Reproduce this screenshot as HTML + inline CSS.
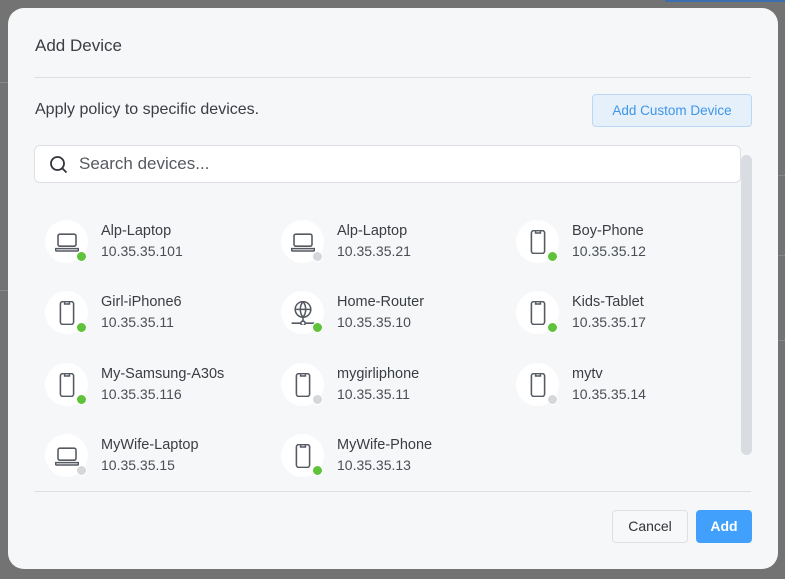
<!DOCTYPE html>
<html><head><style>
*{margin:0;padding:0;box-sizing:border-box}
body{width:785px;height:579px;background:#737373;position:relative;overflow:hidden;font-family:"Liberation Sans",sans-serif;color:#3a3d42}
.bgline{position:absolute;background:#888}
.modal{position:absolute;left:8px;top:8px;width:770px;height:561px;background:#f6f7f9;border-radius:16px}
.a{position:absolute}
.title{left:27px;top:28px;font-size:17px;color:#3a3d42}
.hr{height:1px;background:#dcdfe3;left:26px;width:717px}
.sub{left:27px;top:93px;font-size:16px;color:#3a3d42}
.custom{left:584px;top:86px;width:160px;height:33px;border:1px solid #b9d8f5;background:#e6f0fb;border-radius:4px;color:#3d96e8;font-size:13.5px;text-align:center;line-height:31px}
.search{left:26px;top:137px;width:707px;height:38px;background:#fff;border:1px solid #dde0e4;border-radius:6px}
.search span{position:absolute;left:44px;top:8px;font-size:17px;color:#555a60}
.sb{left:733px;top:147px;width:11px;height:300px;background:#d9dde2;border-radius:6px}
.dev{position:absolute;width:230px;height:46px}
.ic{position:absolute;left:0;top:0;width:43px;height:43px;border-radius:50%;background:#fff}
.ic svg{position:absolute;left:9.5px;top:9.5px}
.dot{position:absolute;left:31px;top:31px;width:11px;height:11px;border-radius:50%;border:1.5px solid #fff}
.on{background:#5ec23a}.off{background:#d5d7da}
.nm{position:absolute;left:56px;top:3px;font-size:14.5px;color:#3a3d42}
.ip{position:absolute;left:56px;top:23px;font-size:14px;color:#4a4e54}
.btn{height:33px;border-radius:4px;font-size:14px;text-align:center;line-height:31px}
.cancel{left:604px;top:502px;width:76px;border:1px solid #dcdfe3;background:#f7f8fa;color:#2f3236}
.add{left:688px;top:502px;width:56px;background:#40a0fb;color:#fff;font-weight:bold;border:1px solid #40a0fb}
</style></head><body>
<div class="bgline" style="left:0;top:82px;width:8px;height:1px"></div>
<div class="bgline" style="left:0;top:290px;width:8px;height:1px"></div>
<div class="bgline" style="left:778px;top:175px;width:7px;height:1px"></div>
<div class="bgline" style="left:778px;top:255px;width:7px;height:1px"></div>
<div class="bgline" style="left:778px;top:340px;width:7px;height:1px"></div>
<div class="bgline" style="left:665px;top:0;width:120px;height:2px;background:#3b6fb0"></div>
<div class="modal">
<div class="a title">Add Device</div>
<div class="a hr" style="top:69px"></div>
<div class="a sub">Apply policy to specific devices.</div>
<div class="a custom">Add Custom Device</div>
<div class="a search"><svg class="a" style="left:14px;top:9px" width="20" height="20" viewBox="0 0 20 20" fill="none" stroke="#2f3236" stroke-width="1.8"><circle cx="8.5" cy="8.5" r="6.5"/><path d="M13.5 13.5l4 4"/></svg><span>Search devices...</span></div>
<div class="a sb"></div>

<div class="dev" style="left:37px;top:212px"><div class="ic"><svg width="24" height="24" viewBox="2 2 20 20" fill="none" stroke="#555a62" stroke-width="1.3"><rect x="4.5" y="5.5" width="15" height="10" rx="1.5"/><path d="M2.5 17.5h19v1a1 1 0 0 1-1 1h-17a1 1 0 0 1-1-1z"/></svg><div class="dot on"></div></div><div class="nm">Alp-Laptop</div><div class="ip">10.35.35.101</div></div>
<div class="dev" style="left:273px;top:212px"><div class="ic"><svg width="24" height="24" viewBox="2 2 20 20" fill="none" stroke="#555a62" stroke-width="1.3"><rect x="4.5" y="5.5" width="15" height="10" rx="1.5"/><path d="M2.5 17.5h19v1a1 1 0 0 1-1 1h-17a1 1 0 0 1-1-1z"/></svg><div class="dot off"></div></div><div class="nm">Alp-Laptop</div><div class="ip">10.35.35.21</div></div>
<div class="dev" style="left:508px;top:212px"><div class="ic"><svg width="24" height="24" viewBox="2 2 20 20" fill="none" stroke="#555a62" stroke-width="1.3"><rect x="6.5" y="2.5" width="11" height="19" rx="2"/><path d="M10 3v1.5h4V3"/></svg><div class="dot on"></div></div><div class="nm">Boy-Phone</div><div class="ip">10.35.35.12</div></div>

<div class="dev" style="left:37px;top:283px"><div class="ic"><svg width="24" height="24" viewBox="2 2 20 20" fill="none" stroke="#555a62" stroke-width="1.3"><rect x="6.5" y="2.5" width="11" height="19" rx="2"/><path d="M10 3v1.5h4V3"/></svg><div class="dot on"></div></div><div class="nm">Girl-iPhone6</div><div class="ip">10.35.35.11</div></div>
<div class="dev" style="left:273px;top:283px"><div class="ic"><svg width="24" height="24" viewBox="2 2 20 20" fill="none" stroke="#555a62" stroke-width="1.3"><circle cx="12" cy="9" r="6.5"/><path d="M5.5 9h13M12 2.5c-3 3.5-3 9.5 0 13M12 2.5c3 3.5 3 9.5 0 13M12 15.5v3M2.5 20.5h7.5M14 20.5h7.5"/><circle cx="12" cy="20.5" r="1.8"/></svg><div class="dot on"></div></div><div class="nm">Home-Router</div><div class="ip">10.35.35.10</div></div>
<div class="dev" style="left:508px;top:283px"><div class="ic"><svg width="24" height="24" viewBox="2 2 20 20" fill="none" stroke="#555a62" stroke-width="1.3"><rect x="6.5" y="2.5" width="11" height="19" rx="2"/><path d="M10 3v1.5h4V3"/></svg><div class="dot on"></div></div><div class="nm">Kids-Tablet</div><div class="ip">10.35.35.17</div></div>

<div class="dev" style="left:37px;top:355px"><div class="ic"><svg width="24" height="24" viewBox="2 2 20 20" fill="none" stroke="#555a62" stroke-width="1.3"><rect x="6.5" y="2.5" width="11" height="19" rx="2"/><path d="M10 3v1.5h4V3"/></svg><div class="dot on"></div></div><div class="nm">My-Samsung-A30s</div><div class="ip">10.35.35.116</div></div>
<div class="dev" style="left:273px;top:355px"><div class="ic"><svg width="24" height="24" viewBox="2 2 20 20" fill="none" stroke="#555a62" stroke-width="1.3"><rect x="6.5" y="2.5" width="11" height="19" rx="2"/><path d="M10 3v1.5h4V3"/></svg><div class="dot off"></div></div><div class="nm">mygirliphone</div><div class="ip">10.35.35.11</div></div>
<div class="dev" style="left:508px;top:355px"><div class="ic"><svg width="24" height="24" viewBox="2 2 20 20" fill="none" stroke="#555a62" stroke-width="1.3"><rect x="6.5" y="2.5" width="11" height="19" rx="2"/><path d="M10 3v1.5h4V3"/></svg><div class="dot off"></div></div><div class="nm">mytv</div><div class="ip">10.35.35.14</div></div>

<div class="dev" style="left:37px;top:426px"><div class="ic"><svg width="24" height="24" viewBox="2 2 20 20" fill="none" stroke="#555a62" stroke-width="1.3"><rect x="4.5" y="5.5" width="15" height="10" rx="1.5"/><path d="M2.5 17.5h19v1a1 1 0 0 1-1 1h-17a1 1 0 0 1-1-1z"/></svg><div class="dot off"></div></div><div class="nm">MyWife-Laptop</div><div class="ip">10.35.35.15</div></div>
<div class="dev" style="left:273px;top:426px"><div class="ic"><svg width="24" height="24" viewBox="2 2 20 20" fill="none" stroke="#555a62" stroke-width="1.3"><rect x="6.5" y="2.5" width="11" height="19" rx="2"/><path d="M10 3v1.5h4V3"/></svg><div class="dot on"></div></div><div class="nm">MyWife-Phone</div><div class="ip">10.35.35.13</div></div>

<div class="a hr" style="top:483px"></div>
<div class="a btn cancel">Cancel</div>
<div class="a btn add">Add</div>
</div>
</body></html>
